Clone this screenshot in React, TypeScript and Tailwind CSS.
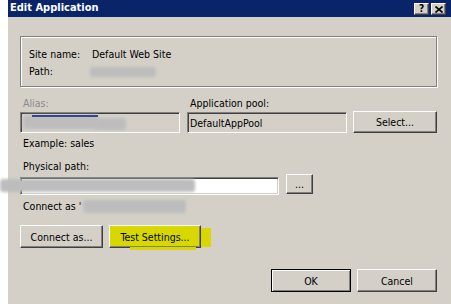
import React from "react";

const font = {
  fontFamily: '"DejaVu Sans Condensed", "DejaVu Sans", Tahoma, sans-serif',
  fontStretch: "condensed" as const,
};

const raised =
  "bg-[#d4d0c8] border border-t-white border-l-white border-b-[#404040] border-r-[#404040] shadow-[inset_-1px_-1px_0_#808080] flex items-center justify-center text-black";

const sunken =
  "border border-t-[#808080] border-l-[#808080] border-b-white border-r-white shadow-[inset_1px_1px_0_#404040,inset_-1px_-1px_0_#d4d0c8]";

function Smudge({ className }: { className: string }) {
  return <div className={"absolute bg-[#bdbdbd] blur-[1.5px] rounded-[3px] " + className} />;
}

export default function App() {
  return (
    <div
      className="relative w-[451px] h-[304px] flex bg-white text-[10.5px] leading-[14px] text-black overflow-hidden"
      style={font}
    >
      <div className="w-[8px] shrink-0" />
      <div className="flex-1 flex flex-col bg-[#d4d0c8]">
        {/* Title bar */}
        <div className="h-[17px] bg-[#0a246a] flex items-start justify-between pl-[2px] pr-[5px]">
          <span className="text-white font-bold text-[11px] leading-[16px]">Edit Application</span>
          <div className="flex gap-[2px] mt-[3px]">
            <div className={raised + " w-[15px] h-[12px] text-[10px] font-bold leading-[10px]"}>?</div>
            <div className={raised + " w-[15px] h-[12px]"}>
              <svg width="8" height="7" viewBox="0 0 8 7">
                <path d="M0.5 0.5 L7.5 6.5 M7.5 0.5 L0.5 6.5" stroke="black" strokeWidth="1.6" />
              </svg>
            </div>
          </div>
        </div>

        <div className="flex flex-col pl-[12px] pr-[14px]">
          {/* Info group */}
          <div className="mt-[19px] h-[51px] border border-[#808080] shadow-[inset_1px_1px_0_#fff,1px_1px_0_#fff] pl-[8px] pt-[8px] flex flex-col">
            <div className="h-[17px] flex items-center">
              <span className="w-[63px]">Site name:</span>
              <span>Default Web Site</span>
            </div>
            <div className="h-[17px] flex items-center">
              <span className="w-[63px]">Path:</span>
              <span className="text-[#bdbdbd]"></span>
            </div>
          </div>

          {/* Alias / app pool labels */}
          <div className="mt-[9px] h-[14px] flex">
            <span className="w-[167px] pl-[3px] text-[#8a8a8a]">Alias:</span>
            <span className="pl-[3px]">Application pool:</span>
          </div>
          <div className="mt-[1px] h-[22px] flex items-start">
            <div className={sunken + " mt-[1px] w-[160px] h-[21px] bg-[#d4d0c8]"} />
            <div className={sunken + " ml-[7px] mt-[1px] w-[160px] h-[21px] bg-[#d4d0c8] flex items-center pl-[2px]"}>
              DefaultAppPool
            </div>
            <button className={raised + " ml-[6px] w-[84px] h-[22px]"}>Select...</button>
          </div>

          <div className="mt-[3px] h-[14px] pl-[3px]">Example: sales</div>

          <div className="mt-[9px] h-[14px] pl-[3px]">Physical path:</div>
          <div className="mt-[1px] h-[21px] flex items-start">
            <div className={sunken + " mt-[3px] w-[259px] h-[18px] bg-white"} />
            <button className={raised + " ml-[7px] w-[27px] h-[20px] leading-[10px]"}>...</button>
          </div>

          <div className="mt-[4px] h-[14px] pl-[3px]">Connect as '</div>

          <div className="mt-[12px] h-[23px] flex">
            <button className={raised + " w-[83px] h-[23px]"}>Connect as...</button>
            <button className={raised + " relative ml-[6px] w-[92px] h-[23px] bg-[#d8d800]"}>
              <span className="relative z-10">Test Settings...</span>
              <span className="absolute left-[91px] top-[2px] w-[10px] h-[19px] bg-[#d8d800]" />
              <span className="absolute left-[20px] top-[21px] w-[66px] h-[3px] bg-[#d8d800]" />
            </button>
          </div>

          <div className="mt-[21px] h-[23px] flex justify-end gap-[6px]">
            <button className="w-[80px] h-[23px] bg-[#d4d0c8] border border-black shadow-[inset_1px_1px_0_#fff,inset_-1px_-1px_0_#808080] flex items-center justify-center">
              OK
            </button>
            <button className={raised + " w-[80px] h-[23px]"}>Cancel</button>
          </div>
        </div>
      </div>

      {/* redaction smudges */}
      <Smudge className="left-[90px] top-[67px] w-[66px] h-[10px]" />
      <Smudge className="left-[23px] top-[115px] w-[75px] h-[14px]" />
      <Smudge className="left-[95px] top-[118px] w-[31px] h-[12px]" />
      <div className="absolute left-[32px] top-[115px] w-[66px] h-[2px] bg-[#31488a] blur-[0.5px]" />
      <Smudge className="left-[0px] top-[179px] w-[195px] h-[13px]" />
      <Smudge className="left-[83px] top-[200px] w-[103px] h-[13px]" />
    </div>
  );
}
